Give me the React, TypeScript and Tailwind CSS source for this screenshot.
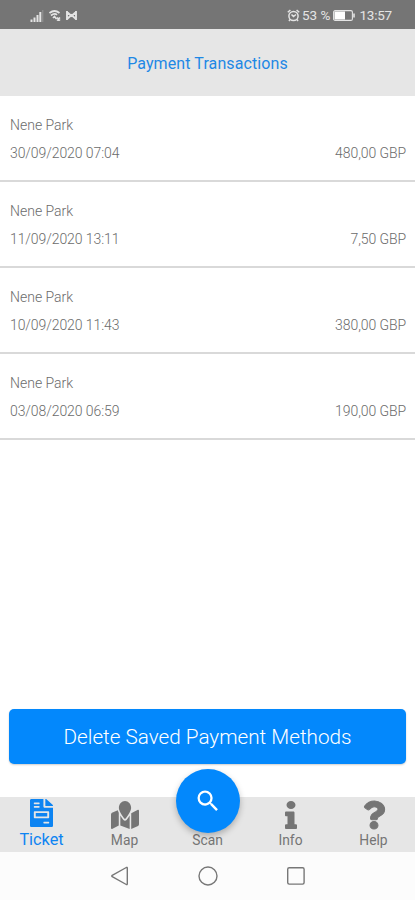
import React, { useState } from 'react';
import { FaFileInvoice, FaMapMarked, FaInfo, FaQuestion } from 'react-icons/fa';
import { MdSearch } from 'react-icons/md';

interface Transaction {
  place: string;
  date: string;
  amount: string;
}

const transactions: Transaction[] = [
  { place: 'Nene Park', date: '30/09/2020 07:04', amount: '480,00 GBP' },
  { place: 'Nene Park', date: '11/09/2020 13:11', amount: '7,50 GBP' },
  { place: 'Nene Park', date: '10/09/2020 11:43', amount: '380,00 GBP' },
  { place: 'Nene Park', date: '03/08/2020 06:59', amount: '190,00 GBP' },
];

const StatusBar: React.FC = () => (
  <div className="flex h-[29px] shrink-0 items-center justify-between bg-[#757575] pt-[2px] pl-[30px] pr-[23px] text-[#e4e4e4]">
    <div className="flex items-center">
      <svg width="14" height="12" viewBox="0 0 14 12" fill="currentColor">
        <path d="M0.5 9.5h2V12h-2zM3.5 7.5h2V12h-2zM6.5 5h2v7h-2zM9.3 2h2v10h-2z" />
        <path d="M12.3 0h1v12h-1z" opacity="0.3" />
      </svg>
      <svg className="ml-[5px]" width="12" height="11" viewBox="0 0 12 11" fill="none" stroke="currentColor" strokeWidth="1.7">
        <path d="M0.5 3Q5.5-1 10.5 3M2 5.5Q5.5 2.5 8 4.8M4 8L5.5 6.5L7.5 9M8 7.5L11 10.5M11 7.5L8 10.5" />
      </svg>
      <svg className="ml-[5px]" width="11" height="9" viewBox="0 0 11 9" fill="none" stroke="currentColor" strokeWidth="1.9">
        <path d="M1 0v9M10 0v9M1 1L5.5 5L10 1M1 8L5.5 4L10 8" />
      </svg>
    </div>
    <div className="flex items-center text-[13.5px] leading-none">
      <svg width="13" height="13" viewBox="0 0 13 13" fill="none" stroke="currentColor" strokeWidth="1.5">
        <circle cx="6.5" cy="7" r="4.6" />
        <path d="M0.8 3.3L3.4 1M12.2 3.3L9.6 1M4.5 5.5L6.5 7.5L9 5.5M3 10.5L2 12M10 10.5L11 12" />
      </svg>
      <span className="ml-[2px] whitespace-nowrap">53 %</span>
      <svg className="ml-[3px]" width="22" height="11" viewBox="0 0 22 11" fill="none" stroke="currentColor">
        <rect x="0.6" y="0.6" width="18.8" height="9.8" rx="1.5" strokeWidth="1.1" />
        <rect x="1.5" y="1.5" width="10.5" height="8" fill="#fff" stroke="none" />
        <path d="M21 3.5v4" strokeWidth="1.6" />
      </svg>
      <span className="ml-[4px] tracking-[-0.2px]">13:57</span>
    </div>
  </div>
);

const TransactionRow: React.FC<{ item: Transaction }> = ({ item }) => (
  <li className="flex h-[86px] flex-col justify-center gap-2 border-b-2 border-[#d9d9d9] pt-[2px] pr-[9px] pl-[10px] text-[14px] leading-5 font-light text-[#6b6b6b]">
    <div>{item.place}</div>
    <div className="flex justify-between tracking-[-0.08px]">
      <span>{item.date}</span>
      <span>{item.amount}</span>
    </div>
  </li>
);

const App: React.FC = () => {
  const [activeTab, setActiveTab] = useState('Ticket');

  const tabs = [
    { name: 'Ticket', icon: <FaFileInvoice width={23} height={28} className="h-[28px] w-[23px]" preserveAspectRatio="none" /> },
    { name: 'Map', icon: <FaMapMarked className="h-[28px] w-[28px]" preserveAspectRatio="none" /> },
    { name: 'Scan', icon: null },
    { name: 'Info', icon: <FaInfo className="h-[28px] w-[12px]" preserveAspectRatio="none" /> },
    { name: 'Help', icon: <FaQuestion className="h-[28px] w-[22px] overflow-visible" preserveAspectRatio="none" stroke="currentColor" strokeWidth={18} /> },
  ];

  return (
    <div className="flex h-[900px] w-[415px] flex-col overflow-hidden bg-white font-['Roboto',sans-serif]">
      <StatusBar />

      <header className="flex h-[67px] shrink-0 items-center justify-center bg-[#e6e6e6] pt-[3px]">
        <h1 className="text-[16px] tracking-[0.1px] text-[#1e88e5]">Payment Transactions</h1>
      </header>

      <ul>
        {transactions.map(item => (
          <TransactionRow key={item.date} item={item} />
        ))}
      </ul>

      {/* Primary action */}
      <div className="mt-auto px-[9px] pb-[33px]">
        <button className="block h-[55px] w-full rounded-[5px] bg-[#0388fc] pt-[2px] text-[20.7px] font-light text-white shadow-[0_1px_2px_rgba(0,0,0,0.2)]">
          Delete Saved Payment Methods
        </button>
      </div>

      {/* Tab bar */}
      <nav className="relative grid h-[55px] shrink-0 grid-cols-5 bg-[#e6e6e6]">
        {tabs.map(tab => (
          <button
            key={tab.name}
            onClick={() => setActiveTab(tab.name)}
            className={`flex flex-col items-center ${activeTab === tab.name ? 'pt-[2px] text-[16.3px] text-[#0d84f2]' : 'pt-[4px] text-[13.8px] text-[#757575]'}`}
          >
            <span className="flex h-[28px] items-center">{tab.icon}</span>
            <span className={activeTab === tab.name ? 'leading-[26px]' : 'leading-[22px]'}>{tab.name}</span>
          </button>
        ))}
        <button className="absolute -top-7 left-[176px] flex h-16 w-16 items-center justify-center rounded-full bg-[#0388fc] text-white shadow-[0_3px_6px_rgba(0,0,0,0.25)]">
          <MdSearch size={28} />
        </button>
      </nav>

      {/* System navigation */}
      <div className="flex h-[48px] shrink-0 items-center justify-center gap-[68px] bg-[#fcfcfc]">
        <svg width="20" height="20" viewBox="0 0 20 20" fill="none" stroke="#777" strokeWidth="1.4" strokeLinejoin="round">
          <path d="M16.3 1.5Q17.3 1 17.3 2.2v15.6Q17.3 19 16.3 18.5L2.2 10.7Q1.4 10 2.2 9.3z" />
        </svg>
        <svg width="20" height="20" viewBox="0 0 20 20" fill="none" stroke="#777" strokeWidth="1.4">
          <circle cx="10" cy="10" r="9" />
        </svg>
        <svg width="20" height="20" viewBox="0 0 20 20" fill="none" stroke="#777" strokeWidth="1.4">
          <rect x="1.7" y="1.7" width="16.4" height="16.4" rx="1.5" />
        </svg>
      </div>
    </div>
  );
};

export default App;
